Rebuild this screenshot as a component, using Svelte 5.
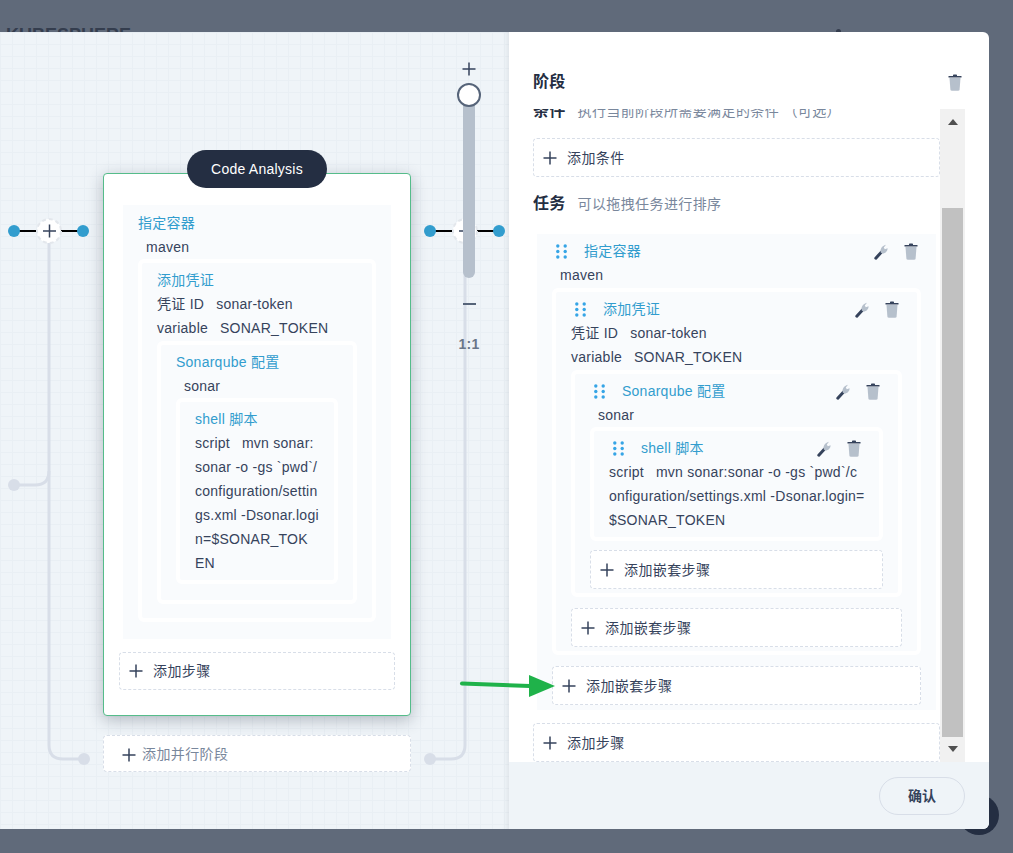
<script>
    const pipeline = {
        title: "指定容器",
        value: "maven",
        children: {
            title: "添加凭证",
            params: [
                { key: "凭证 ID", card: ["sonar-token"], form: ["sonar-token"] },
                { key: "variable", card: ["SONAR_TOKEN"], form: ["SONAR_TOKEN"] }
            ],
            children: {
                title: "Sonarqube 配置",
                value: "sonar",
                children: {
                    title: "shell 脚本",
                    params: [
                        {
                            key: "script",
                            card: [
                                "mvn sonar:",
                                "sonar -o -gs `pwd`/",
                                "configuration/settin",
                                "gs.xml -Dsonar.logi",
                                "n=$SONAR_TOK",
                                "EN"
                            ],
                            form: [
                                "mvn sonar:sonar -o -gs `pwd`/c",
                                "onfiguration/settings.xml -Dsonar.login=",
                                "$SONAR_TOKEN"
                            ]
                        }
                    ]
                }
            }
        }
    };
</script>

{#snippet plus()}
    <svg class="plus" width="14" height="14" viewBox="0 0 14 14">
        <path d="M7 0.5V13.5M0.5 7H13.5" stroke="#36435c" stroke-width="1.5" fill="none" />
    </svg>
{/snippet}

{#snippet addBox(label)}
    <div class="add">
        {@render plus()}
        <span>{label}</span>
    </div>
{/snippet}

{#snippet trash()}
    <svg width="14" height="17" viewBox="0 0 14 17">
        <path d="M5 1.5C5 .8 5.4.5 6 .5H8C8.6.5 9 .8 9 1.5V2H13.5V3.4H.5V2H5Z" fill="#36435c" />
        <path d="M1.5 4H12.500L11.600 15.500C11.500 16.300 11 16.700 10.300 16.700H3.700C3 16.700 2.500 16.300 2.400 15.500Z" fill="#b6c0cc" />
    </svg>
{/snippet}

{#snippet wrench()}
    <svg width="14" height="16" viewBox="0 0 14 16">
        <path d="M1.800 14.200L7.500 8" stroke="#36435c" stroke-width="3" stroke-linecap="round" fill="none" />
        <path d="M6.800 8.500C5.800 5.500 7.800 1.800 12 .8L9.800 3.600L10.800 5.300L13.600 4.200C13.500 7.800 10.500 10 7.900 9.300Z" fill="#b6c0cc" />
    </svg>
{/snippet}

{#snippet dots()}
    <svg class="dots" width="11" height="15" viewBox="0 0 11 15">
        <g fill="#36a5e6">
            <circle cx="1.800" cy="2" r="1.700" />
            <circle cx="9.200" cy="2" r="1.700" />
            <circle cx="1.800" cy="7.500" r="1.700" />
            <circle cx="9.200" cy="7.500" r="1.700" />
            <circle cx="1.800" cy="13" r="1.700" />
            <circle cx="9.200" cy="13" r="1.700" />
        </g>
    </svg>
{/snippet}

{#snippet stepBlock(step, editable)}
    <div class="step" class:compact={!editable}>
        <div class="head">
            {#if editable}{@render dots()}{/if}
            <span class="title">{step.title}</span>
            {#if editable}
                <div class="tools">
                    {@render wrench()}
                    {@render trash()}
                </div>
            {/if}
        </div>
        {#if step.value}
            <div class="value">{step.value}</div>
        {/if}
        {#each step.params ?? [] as param}
            {@const lines = editable ? param.form : param.card}
            {#each lines as line, i}
                <div class="param">{#if i === 0}<span class="key">{param.key}</span>{/if}{line}</div>
            {/each}
        {/each}
        {#if step.children}
            {@render stepBlock(step.children, editable)}
            {#if editable}{@render addBox("添加嵌套步骤")}{/if}
        {/if}
    </div>
{/snippet}

<div class="page">
    <div class="behind">
        <span class="logo">KUBESPHERE</span>
        <span class="tip"></span>
    </div>
    <span class="fab"></span>

    <div class="dialog">
        <div class="canvas">
            <svg class="lines" width="509" height="797" viewBox="0 32 509 797">
                <g fill="none" stroke="#d8dee8" stroke-width="3">
                    <path d="M49 243V745Q49 759 63 759H84" />
                    <path d="M14 485H35Q49 485 49 471" />
                    <path d="M465 240V745Q465 759 451 759H430" />
                </g>
                <g fill="#d8dee8">
                    <circle cx="14" cy="485" r="6" />
                    <circle cx="84" cy="759" r="6" />
                    <circle cx="430" cy="759" r="6" />
                </g>
                <path d="M14 231H83M430 231H499" stroke="#000" stroke-width="2" />
                <g fill="#fff" stroke="#e3e7ec" stroke-width="2" stroke-dasharray="4 3">
                    <circle cx="49" cy="231" r="12" />
                    <circle cx="465" cy="231" r="12" />
                </g>
                <path d="M43 231H56M49.500 224.500V237.500M459 231H472" stroke="#36435c" stroke-width="1.500" />
                <g fill="#329dce">
                    <circle cx="14" cy="231" r="6" />
                    <circle cx="83" cy="231" r="6" />
                    <circle cx="430" cy="231" r="6" />
                    <circle cx="499" cy="231" r="6" />
                </g>
            </svg>

            <div class="card">
                <div class="pill">Code Analysis</div>
                {@render stepBlock(pipeline, false)}
                {@render addBox("添加步骤")}
            </div>

            <div class="parallel">
                {@render plus()}
                <span>添加并行阶段</span>
            </div>

            <div class="zoom">
                {@render plus()}
                <div class="slider">
                    <span class="knob"></span>
                </div>
                <span class="minus"></span>
                <span class="ratio">1:1</span>
            </div>
        </div>

        <div class="panel">
            <div class="panel-head">
                <h3>阶段</h3>
                {@render trash()}
            </div>
            <div class="scroll">
                <div class="content">
                    <div class="section first">
                        <h3>条件</h3>
                        <span class="hint">执行当前阶段所需要满足的条件 （可选）</span>
                    </div>
                    {@render addBox("添加条件")}
                    <div class="section">
                        <h3>任务</h3>
                        <span class="hint">可以拖拽任务进行排序</span>
                    </div>
                    {@render stepBlock(pipeline, true)}
                    {@render addBox("添加步骤")}
                </div>
                <div class="scrollbar">
                    <span class="arrow up"></span>
                    <span class="thumb"></span>
                    <span class="arrow down"></span>
                </div>
            </div>
            <div class="footer">
                <button>确认</button>
            </div>
        </div>
    </div>

    <svg class="pointer" width="100" height="26" viewBox="0 0 100 26">
        <path d="M4 10.500L72 13" stroke="#1fb24a" stroke-width="4" stroke-linecap="round" fill="none" />
        <path d="M71 2L97 13L71 24Z" fill="#1fb24a" />
    </svg>
</div>

<style>
    :global(body) {
        margin: 0;
        background: #606a7a;
    }

    .page {
        position: relative;
        width: 1013px;
        height: 853px;
        overflow: hidden;
        background: #606a7a;
        font-family: "Liberation Sans", "Noto Sans CJK SC", sans-serif;
        font-size: 14px;
        line-height: 24px;
        letter-spacing: 0.25px;
        color: #36435c;
    }

    .behind {
        display: flex;
        height: 32px;
        overflow: hidden;
        padding-left: 6px;
    }

    .logo {
        padding-top: 26px;
        font-size: 18px;
        line-height: 18px;
        font-weight: 700;
        letter-spacing: 0;
        color: #343d4e;
    }

    .tip {
        width: 5px;
        height: 3px;
        margin: 29px 172px 0 auto;
        border-radius: 3px 3px 0 0;
        background: #343d4e;
    }

    .fab {
        position: absolute;
        left: 959px;
        top: 795px;
        width: 40px;
        height: 40px;
        border-radius: 50%;
        background: #242e42;
    }

    .dialog {
        position: relative;
        display: flex;
        width: 989px;
        height: 797px;
        overflow: hidden;
        border-radius: 0 6px 6px 0;
    }

    .canvas {
        position: relative;
        width: 509px;
        flex: none;
        background-color: #eff4f8;
        background-image:
            linear-gradient(#e9eff4 1px, transparent 1px),
            linear-gradient(90deg, #e9eff4 1px, transparent 1px);
        background-size: 12px 12px;
        box-shadow: inset -5px 0 5px -3px rgba(36, 46, 66, 0.08);
    }

    .lines {
        position: absolute;
        left: 0;
        top: 0;
    }

    .card {
        position: absolute;
        left: 103px;
        top: 141px;
        box-sizing: border-box;
        width: 308px;
        height: 543px;
        padding: 31px 19px 0;
        border: 1px solid #55bc8a;
        border-radius: 4px;
        background: #fff;
        box-shadow: 0 4px 16px rgba(36, 46, 66, 0.3);
    }

    .pill {
        position: absolute;
        left: 83px;
        top: -24px;
        width: 140px;
        height: 38px;
        border-radius: 19px;
        background: #242e42;
        color: #fff;
        line-height: 38px;
        text-align: center;
    }

    .parallel {
        position: absolute;
        left: 103px;
        top: 703px;
        box-sizing: border-box;
        display: flex;
        align-items: center;
        gap: 6px;
        width: 308px;
        height: 37px;
        padding-left: 18px;
        border: 1px dashed #d8dee8;
        border-radius: 4px;
        background: #fff;
        letter-spacing: 0.4px;
        color: #79879c;
    }

    .parallel .plus {
        margin-top: 3px;
    }

    .zoom {
        position: absolute;
        left: 456px;
        top: 30px;
        display: flex;
        flex-direction: column;
        align-items: center;
        width: 26px;
    }

    .slider {
        position: relative;
        width: 12px;
        height: 189px;
        margin-top: 13px;
        border-radius: 0 0 6px 6px;
        background: #b6c0cc;
    }

    .knob {
        position: absolute;
        left: -6px;
        top: -6px;
        box-sizing: border-box;
        width: 24px;
        height: 24px;
        border: 2px solid #566479;
        border-radius: 50%;
        background: #fff;
    }

    .minus {
        width: 13px;
        height: 2px;
        margin-top: 25px;
        background: #566479;
    }

    .ratio {
        margin-top: 27px;
        font-weight: 700;
        color: #6a7688;
    }

    .panel {
        position: relative;
        display: flex;
        flex-direction: column;
        flex: 1;
        min-width: 0;
        background: #fff;
    }

    .panel-head {
        display: flex;
        align-items: center;
        justify-content: space-between;
        box-sizing: border-box;
        height: 77px;
        padding: 22px 27px 0 24px;
    }

    .panel-head svg {
        margin-top: 2px;
    }

    h3 {
        margin: 0;
        font-size: 16px;
        font-weight: 700;
        color: #242e42;
    }

    .scroll {
        display: flex;
        height: 653px;
        padding: 0 24px;
    }

    .content {
        flex: 1;
        min-width: 0;
        height: 653px;
        overflow: hidden;
    }

    .section {
        display: flex;
        align-items: center;
        gap: 12px;
        margin: 15px 0 18px;
    }

    .section.first {
        margin: -10px 0 15px;
    }

    .hint {
        letter-spacing: 0.4px;
        color: #79879c;
    }

    .add {
        box-sizing: border-box;
        display: flex;
        align-items: center;
        gap: 10px;
        height: 39px;
        padding-left: 9px;
        border: 1px dashed #d8dee8;
        border-radius: 4px;
        background: #fff;
        letter-spacing: 0.4px;
    }

    .step {
        margin: 0 4px;
        padding: 5px 15px;
        background: #f9fbfd;
    }

    .step .step {
        margin: 1px 0 0;
        padding: 5px 15px 4px;
        border: 4px solid #fff;
        border-radius: 6px;
    }

    .step .step .step .step {
        margin: 0;
        padding-bottom: 5px;
    }

    .step .add {
        margin-top: 11px;
    }

    .step .step .step .add {
        margin-top: 9px;
    }

    .content > .add:last-child {
        margin-top: 13px;
    }

    .head {
        display: flex;
        align-items: center;
        height: 24px;
    }

    .dots {
        margin: 0 17px 0 4px;
    }

    .title {
        color: #329dce;
    }

    .tools {
        display: flex;
        gap: 16px;
        align-items: center;
        margin: 1px 3px 0 auto;
    }

    .value {
        padding-left: 8px;
    }

    .param {
        white-space: nowrap;
    }

    .key {
        margin-right: 12px;
    }

    .step.compact {
        margin: 0;
        padding: 6px 15px 17px;
    }

    .step.compact .compact {
        margin: 0;
        padding: 5px 15px 14px;
    }

    .step.compact .compact .compact {
        margin-top: 1px;
        padding-bottom: 16px;
    }

    .step.compact .compact .compact .compact {
        margin-top: 0;
        padding-bottom: 5px;
    }

    .card > .add {
        height: 38px;
        margin: 13px -4px 0;
    }

    .scrollbar {
        display: flex;
        flex-direction: column;
        align-items: center;
        width: 25px;
        height: 653px;
        background: #f1f1f1;
    }

    .arrow {
        width: 0;
        height: 0;
        border-left: 5.500px solid transparent;
        border-right: 5.500px solid transparent;
    }

    .arrow.up {
        margin-top: 10px;
        border-bottom: 6px solid #505050;
    }

    .thumb {
        width: 21px;
        height: 529px;
        margin-top: 83px;
        background: #c1c1c1;
    }

    .arrow.down {
        margin-top: 9px;
        border-top: 6px solid #505050;
    }

    .footer {
        display: flex;
        align-items: center;
        justify-content: flex-end;
        flex: 1;
        padding-right: 24px;
        background: #eff4f8;
    }

    button {
        width: 86px;
        height: 38px;
        padding: 0;
        border: 1px solid #d8dee8;
        border-radius: 19px;
        background: transparent;
        font: inherit;
        font-weight: 700;
        color: #36435c;
    }

    .pointer {
        position: absolute;
        left: 458px;
        top: 673px;
    }
</style>
